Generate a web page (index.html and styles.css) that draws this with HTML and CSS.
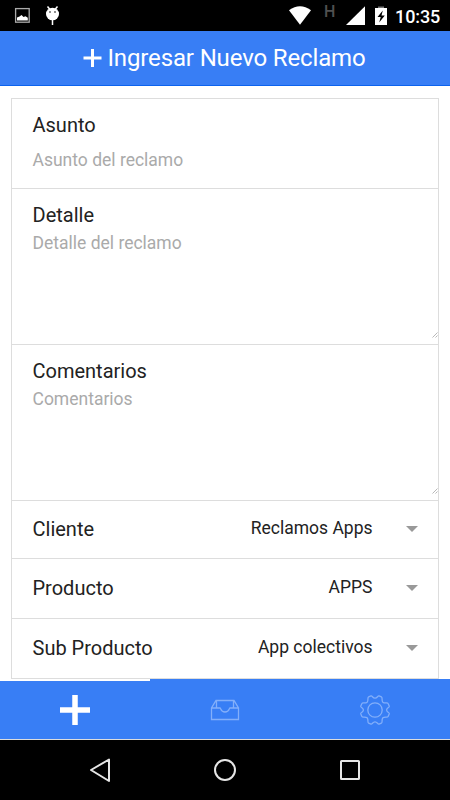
FILE: index.html
```html
<!DOCTYPE html>
<html lang="es">
<head>
<meta charset="utf-8">
<title>Ingresar Nuevo Reclamo</title>
<link rel="stylesheet" href="styles.css">
</head>
<body>
<div class="status">
  <svg width="70" height="31" viewBox="0 0 70 31">
    <rect x="15.600" y="8.600" width="13.600" height="13.600" fill="none" stroke="#aaa" stroke-width="1.300"/>
    <path d="M17 20.500v-3l2.500-1 2-1.500 2 2 2-.8 2.300 1.500v2.800z" fill="#fff"/>
    <path d="M47.500 6.500l2.500 3M57.500 6.500l-2.500 3M52.500 20v5" stroke="#fff" stroke-width="1.500"/>
    <ellipse cx="52.500" cy="14" rx="6.500" ry="6.300" fill="#fff"/>
    <circle cx="50" cy="12" r=".8"/><circle cx="55" cy="12" r=".8"/>
  </svg>
  <svg class="wifi" width="24" height="31" viewBox="0 0 24 31"><path d="M1 10.300Q12 2.300 23 10.300L12 24.800z" fill="#fff"/></svg>
  <span class="network">H</span>
  <svg class="signal" width="44" height="31" viewBox="0 0 44 31">
    <path d="M20 6.300V25H1z" fill="#fff"/>
    <path d="M33 8V6.500h6V8z" fill="#777"/><path d="M30 8h12v17H30z" fill="#fff"/>
    <path d="M37.800 10.500L32.500 17h3.200l-1.500 5.500L39.800 15.500h-3.300z" fill="#000"/>
  </svg>
  <span class="clock">10:35</span>
</div>
<header class="header">
  <svg width="19" height="19" viewBox="0 0 19 19"><path d="M.5 9h18M9.500 0v18" stroke="#fff" stroke-width="3"/></svg>
  <h1>Ingresar Nuevo Reclamo</h1>
</header>
<main class="content">
  <form class="card">
    <div class="row asunto"><label>Asunto</label><div class="field">Asunto del reclamo</div></div>
    <div class="row area"><label>Detalle</label><div class="field">Detalle del reclamo</div>
      <svg class="grip" width="6" height="6" viewBox="0 0 6 6"><path d="M.5 5.500l5-5M3.500 5.500l2-2" stroke="#999" stroke-width=".7"/></svg></div>
    <div class="row area"><label>Comentarios</label><div class="field">Comentarios</div>
      <svg class="grip" width="6" height="6" viewBox="0 0 6 6"><path d="M.5 5.500l5-5M3.500 5.500l2-2" stroke="#999" stroke-width=".7"/></svg></div>
    <div class="row select cliente"><label>Cliente</label><span class="value">Reclamos Apps</span><i class="arrow"></i></div>
    <div class="row select"><label>Producto</label><span class="value">APPS</span><i class="arrow"></i></div>
    <div class="row select"><label>Sub Producto</label><span class="value">App colectivos</span><i class="arrow"></i></div>
  </form>
</main>
<nav class="tabs">
  <a class="tab active"><svg width="32" height="32" viewBox="0 0 32 32"><path d="M1 16h30M16 1v30" stroke="#fff" stroke-width="5.500"/></svg></a>
  <a class="tab"><svg width="32" height="32" viewBox="0 0 32 32"><path d="M2.500 25.500V14L7 6.500H25L29.500 14V25.500zM2.500 14H11C12 14 11.500 18 16 18S20 14 21 14H29.500M7.500 6.500V14M24.500 6.500V14" fill="none" stroke="#83affa" stroke-width="1.300"/></svg></a>
  <a class="tab"><svg width="32" height="32" viewBox="0 0 32 32" fill="none" stroke="#83affa" stroke-width="1.300" stroke-linejoin="round"><circle cx="16" cy="16" r="7.200"/><path d="M12 1.900C13.200 1.400 13.700 4.200 16 4.200S18.800 1.400 20 1.900L22.400 2.900C23.900 3.500 22.200 6 23.800 8.200C26 9.800 28.500 8.100 29.100 9.600L30.300 12.200C30.700 13.300 27.600 13.700 27.600 16S30.700 18.700 30.300 19.800L29.100 22.400C28.500 23.900 26 22.200 23.800 23.800C22.200 26 23.900 28.500 22.400 29.100L20 30.100C18.800 30.600 18.300 27.800 16 27.800S13.200 30.600 12 30.100L9.600 29.100C8.100 28.500 9.800 26 8.200 23.800C6 22.200 3.500 23.900 2.900 22.400L1.700 19.800C1.300 18.700 4.400 18.300 4.400 16S1.300 13.300 1.700 12.200L2.900 9.600C3.500 8.100 6 9.800 8.200 8.200C9.800 6 8.100 3.500 9.600 2.900z"/></svg></a>
</nav>
<footer class="nav">
  <svg width="450" height="60" viewBox="0 0 450 60" fill="none" stroke="#e6e6e6" stroke-width="2">
    <path d="M109 19.500V41L91 30z" stroke-linejoin="round"/>
    <circle cx="225" cy="30" r="10"/>
    <rect x="341" y="21" width="18" height="18" rx=".5"/>
  </svg>
</footer>
</body>
</html>
```
FILE: styles.css
```css
* { box-sizing: border-box; }
body { margin: 0; width: 450px; height: 800px; overflow: hidden; display: flex; flex-direction: column; background: #fff; font-family: Roboto, sans-serif; color: #222; }
svg { display: block; flex: none; }
.status { height: 31px; background: #000; display: flex; padding-right: 10px; }
.wifi { margin-left: auto; }
.network { color: #505050; font-size: 16px; font-weight: 500; line-height: 23px; width: 12px; margin: 0 9px 0 12px; }
.clock { color: #fff; font-size: 18px; line-height: 33px; font-weight: 500; width: 45px; margin-left: 6px; white-space: nowrap; letter-spacing: -0.1px; }
.header { height: 55px; background: #387ef5; border-bottom: 1px solid #0c63ee; display: flex; align-items: center; justify-content: center; gap: 5px; padding-right: 1px; color: #fff; }
h1 { margin: 0; font-size: 24px; font-weight: 400; line-height: 30px; letter-spacing: -0.14px; }
.content { height: 593px; padding: 12px 11px 0; }
.card { border: 1px solid #ddd; height: 581px; }
.row { border-bottom: 1px solid #ddd; padding: 0 20.500px; position: relative; }
label { display: block; font-size: 20px; line-height: 24px; }
.field { font-size: 17.500px; line-height: 20px; color: #aaa; }
.asunto { height: 90px; padding-top: 14px; }
.asunto .field { margin-top: 13px; }
.area { height: 156px; padding-top: 14px; }
.area .field { margin-top: 6px; }
.grip { position: absolute; right: 0; bottom: 6px; }
.select { height: 60px; display: flex; align-items: center; padding-bottom: 1px; }
.cliente { height: 58px; }
.select:last-child { border: 0; padding-bottom: 2px; }
.value { margin-left: auto; font-size: 17.500px; padding-bottom: 2px; }
.arrow { border: 6px solid transparent; border-top-color: #999; border-bottom: 0; margin-left: 33px; }
.tabs { height: 61px; display: flex; background: #387ef5; border-bottom: 1px solid #ddd; }
.tab { flex: 1; display: flex; align-items: center; justify-content: center; border-top: 2px solid #387ef5; }
.active { border-top-color: #fff; }
.nav { height: 60px; background: #000; }
```
